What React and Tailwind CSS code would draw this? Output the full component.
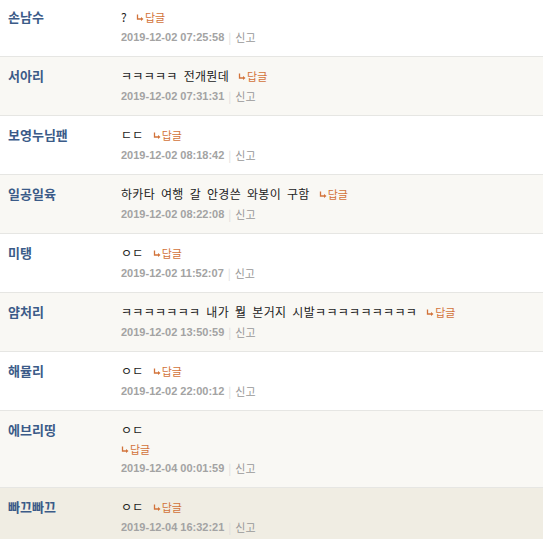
import React from "react";

const comments = [
  { name: "손남수", text: "?", date: "2019-12-02 07:25:58", bg: "bg-white" },
  { name: "서아리", text: "ㅋㅋㅋㅋㅋ 전개뭔데", date: "2019-12-02 07:31:31", bg: "bg-[#f9f8f4]" },
  { name: "보영누님팬", text: "ㄷㄷ", date: "2019-12-02 08:18:42", bg: "bg-white" },
  { name: "일공일육", text: "하카타 여행 갈 안경쓴 와봉이 구함", date: "2019-12-02 08:22:08", bg: "bg-[#f9f8f4]" },
  { name: "미탱", text: "ㅇㄷ", date: "2019-12-02 11:52:07", bg: "bg-white" },
  { name: "얌처리", text: "ㅋㅋㅋㅋㅋㅋㅋ 내가 뭘 본거지 시발ㅋㅋㅋㅋㅋㅋㅋㅋㅋ", date: "2019-12-02 13:50:59", bg: "bg-[#f9f8f4]" },
  { name: "해뮬리", text: "ㅇㄷ", date: "2019-12-02 22:00:12", bg: "bg-white" },
  { name: "에브리띵", text: "ㅇㄷ", date: "2019-12-04 00:01:59", bg: "bg-[#f9f8f4]", stacked: true },
  { name: "빠끄빠끄", text: "ㅇㄷ", date: "2019-12-04 16:32:21", bg: "bg-[#f0ede3]" },
];

function ReplyLink({ className = "" }) {
  return (
    <span className={"inline-flex items-center text-[11px] text-[#d2733a] " + className}>
      <svg width="8" height="8" viewBox="0 0 8 8" className="mr-[1px] mt-[2px]">
        <path d="M1.5 0.5 V5 H6" fill="none" stroke="#d2733a" strokeWidth="1.3" />
        <path d="M5 3 L7.5 5 L5 7 Z" fill="#d2733a" />
      </svg>
      답글
    </span>
  );
}

function Comment({ c }) {
  return (
    <div className={"flex border-b border-[#e6e6e3] pt-[10px] pb-[10px] " + c.bg}>
      <div className="w-[121px] shrink-0 pl-[8px] text-[13px] leading-[18px] font-bold text-[#3b5b88]">
        {c.name}
      </div>
      <div className="flex-1">
        <div className="flex items-center h-[18px] text-[12px] text-[#222]">
          <span className="whitespace-pre tracking-[0.3px] [word-spacing:3px]">{c.text}</span>
          {!c.stacked && <ReplyLink className="ml-[9px]" />}
        </div>
        {c.stacked && (
          <div className="flex items-center h-[18px] mt-[1px]">
            <ReplyLink />
          </div>
        )}
        <div
          className={
            "flex items-center h-[18px] text-[11px] " + (c.stacked ? "mt-[1px]" : "mt-[2px]")
          }
        >
          <span className="font-bold text-[#a3a3a3] [font-family:'Liberation_Sans',Arial,sans-serif]">
            {c.date}
          </span>
          <span className="mx-[4px] text-[#dcdcdc]">|</span>
          <span className="text-[#999]">신고</span>
        </div>
      </div>
    </div>
  );
}

export default function App() {
  return (
    <div
      className="w-[543px] h-[539px] overflow-hidden bg-white"
      style={{ fontFamily: "'Noto Sans CJK KR', 'Noto Sans', sans-serif" }}
    >
      <div className="-mt-[2px]">
        {comments.map((c) => (
          <Comment key={c.name} c={c} />
        ))}
      </div>
    </div>
  );
}
